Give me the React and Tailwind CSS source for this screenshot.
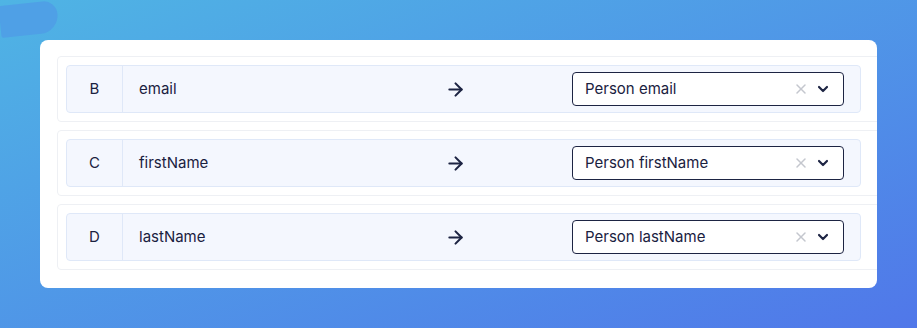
import { X, ChevronDown, ArrowRight } from 'lucide-react';

const rows = [
  { col: 'B', field: 'email', target: 'Person email' },
  { col: 'C', field: 'firstName', target: 'Person firstName' },
  { col: 'D', field: 'lastName', target: 'Person lastName' },
];

function MappingRow({ row }) {
  return (
    <div className="w-[837px] ml-[17px] border border-[#eef0f4] rounded-[4px] p-2">
      <div className="w-[795px] h-[48px] flex items-center bg-[#f4f7fe] border border-[#dfe8f8] rounded-[4px]">
        <div className="w-[56px] h-full flex items-center justify-center border-r border-[#dfe8f8] text-[15px]">
          {row.col}
        </div>
        <div className="w-[300px] pl-4 text-[15px]">{row.field}</div>
        <div className="w-[64px] flex justify-center">
          <ArrowRight size={21} strokeWidth={2.4} className="text-[#1d2443]" />
        </div>
        <div className="flex-1" />
        <div className="w-[272px] h-[34px] mr-4 flex items-center border border-[#1d2443] rounded-[4px] bg-white pl-3 pr-3">
          <span className="flex-1 text-[15px]">{row.target}</span>
          <X size={16} strokeWidth={2.25} className="text-[#c4c7ce] mr-[6px]" />
          <ChevronDown size={16} strokeWidth={3.25} className="text-[#1d2443]" />
        </div>
      </div>
    </div>
  );
}

export default function App() {
  return (
    <div
      className="relative w-[917px] h-[328px] overflow-hidden bg-gradient-to-br from-[#4fb4e4] to-[#5077e9] pt-10 pl-10 text-[#1a2140]"
      style={{ fontFamily: 'Inter, "Noto Sans", sans-serif' }}
    >
      <div className="absolute left-0 top-[6px] w-[58px] h-[32px] bg-[#4fa0e6] rounded-tr-[30px] rounded-br-[40px] rounded-bl-[4px] rotate-[-6deg] origin-left" />
      <div className="relative w-[837px] h-[248px] bg-white rounded-lg overflow-hidden pt-4 flex flex-col gap-2">
        {rows.map((r) => (
          <MappingRow key={r.col} row={r} />
        ))}
      </div>
    </div>
  );
}
